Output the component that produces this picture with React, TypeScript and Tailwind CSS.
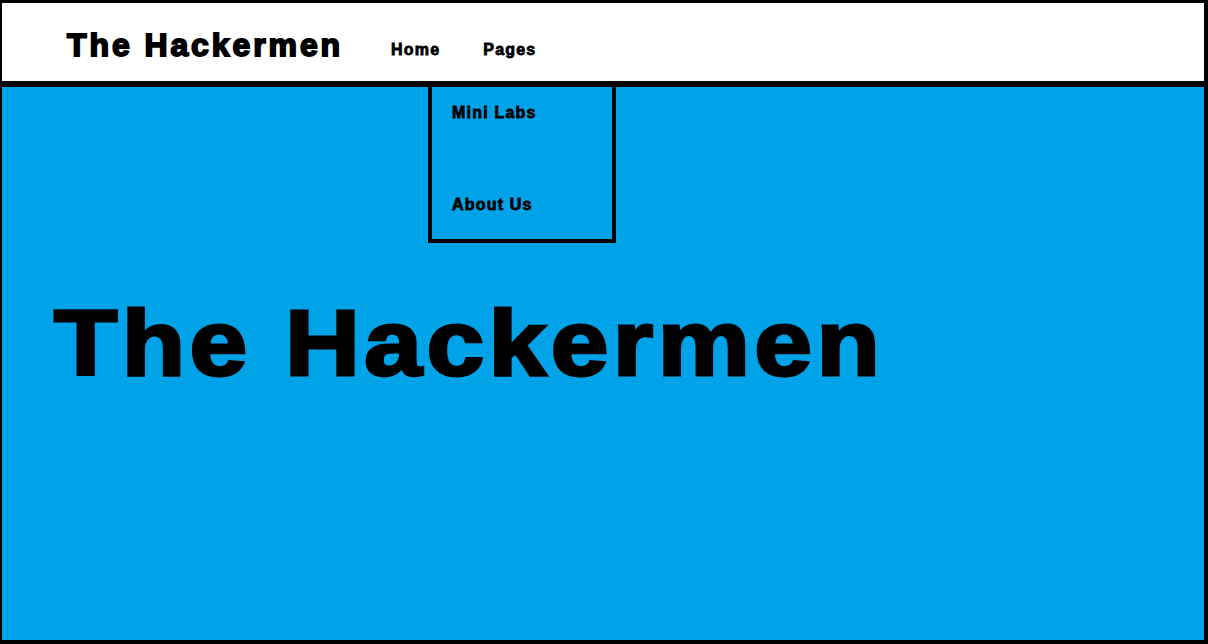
const font = "font-['Liberation_Sans',Arial,sans-serif]";

const App = () => {
  return (
    <div className={`w-[1208px] h-[644px] relative overflow-hidden text-black ${font}`}>
      {/* Header bar */}
      <header className="h-[84px] bg-white border-t-[3px] border-l-2 border-r-4 border-b-[3px] border-black flex items-start pl-[65px]">
        <h1 className="text-[32px] leading-[36px] font-bold tracking-[2.9px] mt-[24px] [-webkit-text-stroke:1.8px_black]">The Hackermen</h1>
        <nav className="flex items-start mt-[37px] text-[16px] leading-[20px] font-bold tracking-[1.2px] [-webkit-text-stroke:0.8px_black]">
          <a className="ml-[48px]">Home</a>
          <a className="ml-[43px]">Pages</a>
        </nav>
      </header>

      {/* Main hero */}
      <main className="h-[560px] bg-[#00a2e8] border-t-[3px] border-l-2 border-r-4 border-b-4 border-black pl-[52px] pt-[210px]">
        <h2 className="w-fit text-[93px] leading-[93px] font-bold tracking-[4px] origin-left scale-x-[1.115] [-webkit-text-stroke:3px_black]">The Hackermen</h2>
      </main>

      {/* Pages dropdown */}
      <div className="absolute left-[428px] top-[83px] w-[188px] h-[160px] border-4 border-black bg-[#00a2e8] pl-[20px] pt-[16px] flex flex-col text-[16px] leading-[20px] font-bold tracking-[1.2px] [-webkit-text-stroke:0.8px_black]">
        <a>Mini Labs</a>
        <a className="mt-[72px]">About Us</a>
      </div>
    </div>
  );
};

export default App;
